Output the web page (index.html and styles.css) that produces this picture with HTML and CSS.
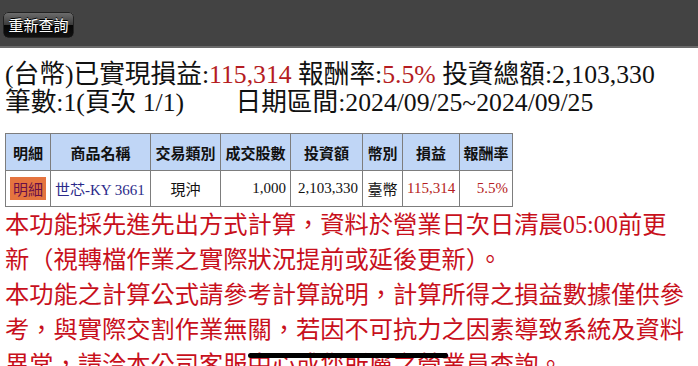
FILE: index.html
```html
<!DOCTYPE html>
<html lang="zh-Hant">
<head>
  <meta charset="UTF-8">
  <title>已實現損益</title>
  <link rel="stylesheet" href="styles.css">
</head>
<body>
  <!-- 상단바 -->
  <div class="topbar">
    <button class="btn-requery">重新查詢</button>
  </div>

  <!-- 요약 -->
  <div class="summary">
    <p>(台幣)已實現損益:<span class="red">115,314</span> 報酬率:<span class="red">5.5%</span> 投資總額:2,103,330</p>
    <p>筆數:1(頁次 1/1)&nbsp;&nbsp;&nbsp;&nbsp;&nbsp;&nbsp;&nbsp;&nbsp;日期區間:2024/09/25~2024/09/25</p>
  </div>

  <!-- 목록 -->
  <table class="list">
    <colgroup>
      <col style="width:45px">
      <col style="width:100px">
      <col style="width:70px">
      <col style="width:70px">
      <col style="width:72px">
      <col style="width:40px">
      <col style="width:57px">
      <col style="width:53px">
    </colgroup>
    <tr>
      <th>明細</th>
      <th>商品名稱</th>
      <th>交易類別</th>
      <th>成交股數</th>
      <th>投資額</th>
      <th>幣別</th>
      <th>損益</th>
      <th>報酬率</th>
    </tr>
    <tr>
      <td class="c"><span class="detail">明細</span></td>
      <td class="name">世芯-KY 3661</td>
      <td class="c sans">現沖</td>
      <td class="r">1,000</td>
      <td class="r">2,103,330</td>
      <td class="c sans">臺幣</td>
      <td class="r red">115,314</td>
      <td class="r red">5.5%</td>
    </tr>
  </table>

  <!-- 안내문 -->
  <div class="notice">
    <p>本功能採先進先出方式計算，資料於營業日次日清晨05:00前更新（視轉檔作業之實際狀況提前或延後更新）。</p>
    <p>本功能之計算公式請參考計算說明，計算所得之損益數據僅供參考，與實際交割作業無關，若因不可抗力之因素導致系統及資料異常，請洽本公司客服中心或您所屬之營業員查詢。</p>
  </div>

  <!-- 홈 인디케이터 -->
  <div class="home-bar"></div>
</body>
</html>
```

FILE: styles.css
```css
html, body{
  margin: 0;
  padding: 0;
}

body{
  height: 366px;
  overflow: hidden;
  background-color: #fff;
  font-family: "Liberation Serif", "Noto Sans CJK TC", serif;
  color: #111;
}

p{
  margin: 0;
}

/* 상단바 */
.topbar{
  height: 46px;
  background-color: #434343;
  border-bottom: 2px solid #6a6a6a;
}
.btn-requery{
  margin: 12px 0 0 3px;
  width: 71px;
  height: 26px;
  padding: 0;
  border: 1px solid #222;
  border-radius: 5px;
  background-image: linear-gradient(to bottom, #6c6c6c, #3a3a3a 50%, #050505 50%, #111);
  color: #fff;
  font-family: "Noto Sans CJK TC", sans-serif;
  font-size: 15px;
  line-height: 24px;
  text-shadow: 0 -1px 0 #000;
}

/* 요약 */
.summary{
  padding: 13px 0 0 5px;
  font-size: 25.7px;
  line-height: 28px;
  white-space: nowrap;
}
.red{
  color: #b51c22;
}

/* 목록 */
.list{
  margin: 16px 0 0 5px;
  border-collapse: collapse;
  table-layout: fixed;
  width: 507px;
  font-size: 15px;
}
.list th,
.list td{
  border: 1px solid #7d7d7d;
  padding: 0 4px;
  white-space: nowrap;
}
.list th{
  height: 36px;
  background-color: #c0d6f6;
  font-family: "Noto Sans CJK TC", sans-serif;
  font-size: 15px;
  font-weight: bold;
  text-align: center;
  padding: 0;
}
.list td{
  height: 35px;
}
.list .c{
  text-align: center;
  padding: 0;
}
.list .r{
  text-align: right;
}
.list .sans{
  font-family: "Noto Sans CJK TC", sans-serif;
  font-size: 15px;
}
.list .name{
  color: #2b2a8a;
}
.detail{
  display: inline-block;
  width: 36px;
  height: 23px;
  line-height: 23px;
  background-color: #e5743f;
  color: #6a1048;
  font-family: "Noto Sans CJK TC", sans-serif;
  font-size: 15px;
}

/* 안내문 */
.notice{
  padding: 0 10px 0 5px;
  color: #c8101c;
  font-size: 24.25px;
  line-height: 35px;
}

.home-bar{
  position: fixed;
  left: 248px;
  top: 353px;
  width: 200px;
  height: 5px;
  border-radius: 3px;
  background-color: #000;
}
```
